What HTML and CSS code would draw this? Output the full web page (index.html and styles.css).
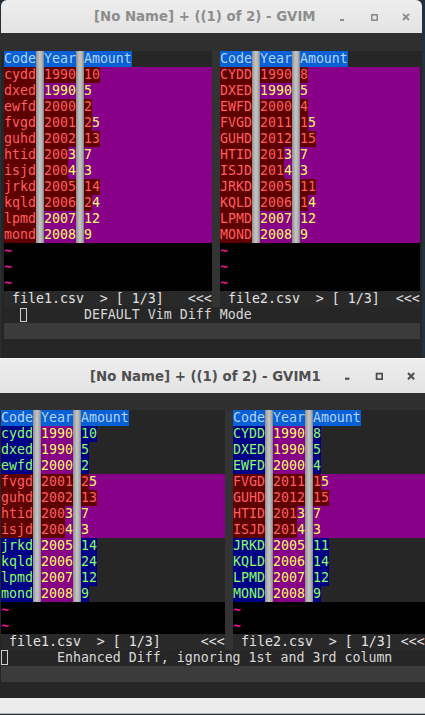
FILE: index.html
```html
<!DOCTYPE html>
<html>
<head>
<meta charset="utf-8">
<link rel="stylesheet" href="styles.css">
</head>
<body>
<div class="win w1">
  <div class="titlebar">
    <span class="title">[No Name] + ((1) of 2) - GVIM</span>
    <div class="btns">
      <span class="btn"><svg width="8" height="8" viewBox="0 0 8 8"><rect x="2" y="6" width="4" height="2" fill="currentColor"/></svg></span>
      <span class="btn"><svg width="8" height="8" viewBox="0 0 8 8"><rect x="1.8" y="1.8" width="5.4" height="5.4" fill="none" stroke="currentColor" stroke-width="1.6"/></svg></span>
      <span class="btn"><svg width="8" height="8" viewBox="0 0 8 8"><path d="M1 1L7 7M7 1L1 7" stroke="currentColor" stroke-width="1.8" fill="none"/></svg></span>
    </div>
  </div>
  <div class="vim">
    <div class="topband"></div>
    <div class="split">
      <div class="pane c26">
        <div class="row"><span class="hd">Code</span><span class="sp"> </span><span class="hd">Year</span><span class="sp"> </span><span class="hd">Amount</span></div>
        <div class="row chg"><span class="dt">cydd</span><span class="sp"> </span><span class="dt">1990</span><span class="sp"> </span><span class="dt">10</span></div>
        <div class="row chg"><span class="dt">dxed</span><span class="sp"> </span><span class="ch">1990</span><span class="sp"> </span><span class="ch">5</span></div>
        <div class="row chg"><span class="dt">ewfd</span><span class="sp"> </span><span class="dt">2000</span><span class="sp"> </span><span class="dt">2</span></div>
        <div class="row chg"><span class="dt">fvgd</span><span class="sp"> </span><span class="dt">2001</span><span class="sp"> </span><span class="dt">2</span><span class="ch">5</span></div>
        <div class="row chg"><span class="dt">guhd</span><span class="sp"> </span><span class="dt">2002</span><span class="sp"> </span><span class="dt">13</span></div>
        <div class="row chg"><span class="dt">htid</span><span class="sp"> </span><span class="dt">200</span><span class="ch">3</span><span class="sp"> </span><span class="ch">7</span></div>
        <div class="row chg"><span class="dt">isjd</span><span class="sp"> </span><span class="dt">200</span><span class="ch">4</span><span class="sp"> </span><span class="ch">3</span></div>
        <div class="row chg"><span class="dt">jrkd</span><span class="sp"> </span><span class="dt">2005</span><span class="sp"> </span><span class="dt">14</span></div>
        <div class="row chg"><span class="dt">kqld</span><span class="sp"> </span><span class="dt">2006</span><span class="sp"> </span><span class="dt">2</span><span class="ch">4</span></div>
        <div class="row chg"><span class="dt">lpmd</span><span class="sp"> </span><span class="ch">2007</span><span class="sp"> </span><span class="ch">12</span></div>
        <div class="row chg"><span class="dt">mond</span><span class="sp"> </span><span class="ch">2008</span><span class="sp"> </span><span class="ch">9</span></div>
        <div class="row eob"><span class="tilde">~</span></div>
        <div class="row eob"><span class="tilde">~</span></div>
        <div class="row eob"><span class="tilde">~</span></div>
        <div class="row status"> file1.csv  &gt; [ 1/3]   &lt;&lt;&lt;</div>
      </div>
      <div class="vsep"></div>
      <div class="pane c25">
        <div class="row"><span class="hd">Code</span><span class="sp"> </span><span class="hd">Year</span><span class="sp"> </span><span class="hd">Amount</span></div>
        <div class="row chg"><span class="dt">CYDD</span><span class="sp"> </span><span class="dt">1990</span><span class="sp"> </span><span class="dt">8</span></div>
        <div class="row chg"><span class="dt">DXED</span><span class="sp"> </span><span class="ch">1990</span><span class="sp"> </span><span class="ch">5</span></div>
        <div class="row chg"><span class="dt">EWFD</span><span class="sp"> </span><span class="dt">2000</span><span class="sp"> </span><span class="dt">4</span></div>
        <div class="row chg"><span class="dt">FVGD</span><span class="sp"> </span><span class="dt">2011</span><span class="sp"> </span><span class="dt">1</span><span class="ch">5</span></div>
        <div class="row chg"><span class="dt">GUHD</span><span class="sp"> </span><span class="dt">2012</span><span class="sp"> </span><span class="dt">15</span></div>
        <div class="row chg"><span class="dt">HTID</span><span class="sp"> </span><span class="dt">201</span><span class="ch">3</span><span class="sp"> </span><span class="ch">7</span></div>
        <div class="row chg"><span class="dt">ISJD</span><span class="sp"> </span><span class="dt">201</span><span class="ch">4</span><span class="sp"> </span><span class="ch">3</span></div>
        <div class="row chg"><span class="dt">JRKD</span><span class="sp"> </span><span class="dt">2005</span><span class="sp"> </span><span class="dt">11</span></div>
        <div class="row chg"><span class="dt">KQLD</span><span class="sp"> </span><span class="dt">2006</span><span class="sp"> </span><span class="dt">1</span><span class="ch">4</span></div>
        <div class="row chg"><span class="dt">LPMD</span><span class="sp"> </span><span class="ch">2007</span><span class="sp"> </span><span class="ch">12</span></div>
        <div class="row chg"><span class="dt">MOND</span><span class="sp"> </span><span class="ch">2008</span><span class="sp"> </span><span class="ch">9</span></div>
        <div class="row eob"><span class="tilde">~</span></div>
        <div class="row eob"><span class="tilde">~</span></div>
        <div class="row eob"><span class="tilde">~</span></div>
        <div class="row status"> file2.csv  &gt; [ 1/3]  &lt;&lt;&lt;</div>
      </div>
    </div>
    <div class="row cmd"><span class="gap2">  </span><span class="cursor"></span><span>       DEFAULT Vim Diff Mode</span></div>
    <div class="band1"></div>
    <div class="band2"></div>
  </div>
</div>

<div class="win w2">
  <div class="titlebar">
    <span class="title">[No Name] + ((1) of 2) - GVIM1</span>
    <div class="btns">
      <span class="btn"><svg width="8" height="8" viewBox="0 0 8 8"><rect x="2" y="5.6" width="4.4" height="2.2" fill="currentColor"/></svg></span>
      <span class="btn"><svg width="8" height="8" viewBox="0 0 8 8"><rect x="1.6" y="1.6" width="5.6" height="5.6" fill="none" stroke="currentColor" stroke-width="1.8"/></svg></span>
      <span class="btn"><svg width="8" height="8" viewBox="0 0 8 8"><path d="M1 1L7.2 7.2M7.2 1L1 7.2" stroke="currentColor" stroke-width="2" fill="none"/></svg></span>
    </div>
  </div>
  <div class="vim">
    <div class="topband"></div>
    <div class="split">
      <div class="pane c28">
        <div class="row"><span class="hd">Code</span><span class="sp"> </span><span class="hd">Year</span><span class="sp"> </span><span class="hd">Amount</span></div>
        <div class="row"><span class="ad">cydd</span><span class="sp"> </span><span class="yp">1990</span><span class="sp"> </span><span class="ad">10</span></div>
        <div class="row"><span class="ad">dxed</span><span class="sp"> </span><span class="yp">1990</span><span class="sp"> </span><span class="ad">5</span></div>
        <div class="row"><span class="ad">ewfd</span><span class="sp"> </span><span class="yp">2000</span><span class="sp"> </span><span class="ad">2</span></div>
        <div class="row chg"><span class="dt">fvgd</span><span class="sp"> </span><span class="dt">2001</span><span class="sp"> </span><span class="dt">2</span><span class="ch">5</span></div>
        <div class="row chg"><span class="dt">guhd</span><span class="sp"> </span><span class="dt">2002</span><span class="sp"> </span><span class="dt">13</span></div>
        <div class="row chg"><span class="dt">htid</span><span class="sp"> </span><span class="dt">200</span><span class="ch">3</span><span class="sp"> </span><span class="ch">7</span></div>
        <div class="row chg"><span class="dt">isjd</span><span class="sp"> </span><span class="dt">200</span><span class="ch">4</span><span class="sp"> </span><span class="ch">3</span></div>
        <div class="row"><span class="ad">jrkd</span><span class="sp"> </span><span class="yp">2005</span><span class="sp"> </span><span class="ad">14</span></div>
        <div class="row"><span class="ad">kqld</span><span class="sp"> </span><span class="yp">2006</span><span class="sp"> </span><span class="ad">24</span></div>
        <div class="row"><span class="ad">lpmd</span><span class="sp"> </span><span class="yp">2007</span><span class="sp"> </span><span class="ad">12</span></div>
        <div class="row"><span class="ad">mond</span><span class="sp"> </span><span class="yp">2008</span><span class="sp"> </span><span class="ad">9</span></div>
        <div class="row eob"><span class="tilde">~</span></div>
        <div class="row eob"><span class="tilde">~</span></div>
        <div class="row status"> file1.csv  &gt; [ 1/3]     &lt;&lt;&lt;</div>
      </div>
      <div class="vsep"></div>
      <div class="pane c24">
        <div class="row"><span class="hd">Code</span><span class="sp"> </span><span class="hd">Year</span><span class="sp"> </span><span class="hd">Amount</span></div>
        <div class="row"><span class="ad">CYDD</span><span class="sp"> </span><span class="yp">1990</span><span class="sp"> </span><span class="ad">8</span></div>
        <div class="row"><span class="ad">DXED</span><span class="sp"> </span><span class="yp">1990</span><span class="sp"> </span><span class="ad">5</span></div>
        <div class="row"><span class="ad">EWFD</span><span class="sp"> </span><span class="yp">2000</span><span class="sp"> </span><span class="ad">4</span></div>
        <div class="row chg"><span class="dt">FVGD</span><span class="sp"> </span><span class="dt">2011</span><span class="sp"> </span><span class="dt">1</span><span class="ch">5</span></div>
        <div class="row chg"><span class="dt">GUHD</span><span class="sp"> </span><span class="dt">2012</span><span class="sp"> </span><span class="dt">15</span></div>
        <div class="row chg"><span class="dt">HTID</span><span class="sp"> </span><span class="dt">201</span><span class="ch">3</span><span class="sp"> </span><span class="ch">7</span></div>
        <div class="row chg"><span class="dt">ISJD</span><span class="sp"> </span><span class="dt">201</span><span class="ch">4</span><span class="sp"> </span><span class="ch">3</span></div>
        <div class="row"><span class="ad">JRKD</span><span class="sp"> </span><span class="yp">2005</span><span class="sp"> </span><span class="ad">11</span></div>
        <div class="row"><span class="ad">KQLD</span><span class="sp"> </span><span class="yp">2006</span><span class="sp"> </span><span class="ad">14</span></div>
        <div class="row"><span class="ad">LPMD</span><span class="sp"> </span><span class="yp">2007</span><span class="sp"> </span><span class="ad">12</span></div>
        <div class="row"><span class="ad">MOND</span><span class="sp"> </span><span class="yp">2008</span><span class="sp"> </span><span class="ad">9</span></div>
        <div class="row eob"><span class="tilde">~</span></div>
        <div class="row eob"><span class="tilde">~</span></div>
        <div class="row status"> file2.csv  &gt; [ 1/3] &lt;&lt;&lt;</div>
      </div>
    </div>
    <div class="row cmd"><span class="cursor"></span><span>      Enhanced Diff, ignoring 1st and 3rd column</span></div>
    <div class="band1"></div>
    <div class="band2"></div>
  </div>
</div>
<div class="footer"></div>
</body>
</html>
```

FILE: styles.css
```css
html, body {
  margin: 0;
  padding: 0;
}
body {
  width: 425px;
  height: 715px;
  overflow: hidden;
  background: #24303a;
  font-family: "DejaVu Sans Mono", monospace;
}
.win {
  display: flex;
  flex-direction: column;
}
.w1 {
  margin-left: 1px;
  width: 421px;
}
.w2 {
  width: 425px;
}
.titlebar {
  display: flex;
  align-items: center;
  background: linear-gradient(#eeeeee, #e3e3e3);
  font: bold 13.3px "DejaVu Sans", sans-serif;
  white-space: pre;
}
.w1 .titlebar {
  height: 33px;
  border-radius: 6px 6px 0 0;
  color: #8d8d8d;
}
.w1 .title {
  margin-left: 93px;
  margin-top: -1px;
}
.w2 .titlebar {
  height: 35px;
  color: #4f4f4f;
  border-top: 1px solid #f6f6f6;
  box-sizing: border-box;
}
.w2 .title {
  margin-left: 90px;
}
.btns {
  display: flex;
  margin-left: auto;
}
.w2 .btns {
  margin-right: -2px;
}
.btn {
  width: 32px;
  display: flex;
  justify-content: center;
  align-items: center;
}
.vim {
  background: #262626;
  display: flex;
  flex-direction: column;
}
.topband {
  background: #2f2f2f;
}
.w1 .topband { height: 18px; }
.w2 .topband { height: 17px; }
.split {
  display: flex;
}
.w1 .split, .w1 .cmd, .w1 .band1 { margin-left: 3px; }
.w2 .split, .w2 .cmd, .w2 .band1 { margin-left: 1px; }
.pane {
  display: flex;
  flex-direction: column;
}
.c26 { width: 208px; }
.c25 { width: 200px; }
.c28 { width: 224px; }
.c24 { width: 192px; }
.vsep {
  width: 8px;
  background: #333333;
}
.row {
  display: flex;
  height: 16px;
  line-height: 16px;
  white-space: pre;
  font-size: 13.288px;
  color: #d4d4d4;
  overflow: hidden;
}
.chg { background: #870087; }
.eob { background: #000000; }
.hd { background: #0760d6; color: #b4d4fa; }
.sp {
  width: 8px;
  background: linear-gradient(90deg, #8a8a8a 0, #a9a9a9 20%, #c6c6c6 50%, #a9a9a9 80%, #7e7e7e 100%);
}
.dt { background: #5f0000; color: #ff5f5f; }
.ch { color: #ffff5f; }
.ad { background: #000087; color: #87ff5f; }
.yp { background: #870087; color: #ffff5f; }
.tilde {
  color: #f0109c;
  font-weight: bold;
}
.status {
  background: #292929;
  color: #e2e2e2;
}
.cmd {
  color: #d8d8d8;
}
.gap2 {
  width: 16px;
}
.cursor {
  box-sizing: border-box;
  width: 7px;
  height: 15px;
  margin-right: 1px;
  border: 1px solid #cfcfcf;
}
.w1 .cursor {
  margin-top: 1px;
  height: 14px;
}
.band1 {
  height: 16px;
  background: #3b3b3b;
}
.w1 .band1 { width: 416px; }
.w2 .band1 { width: 424px; }
.w1 .band2 { height: 19px; }
.w2 .band2 { height: 16px; }
.footer {
  height: 15px;
  background: #ececec;
  border-bottom: 1px solid #b3b3b3;
}
```
